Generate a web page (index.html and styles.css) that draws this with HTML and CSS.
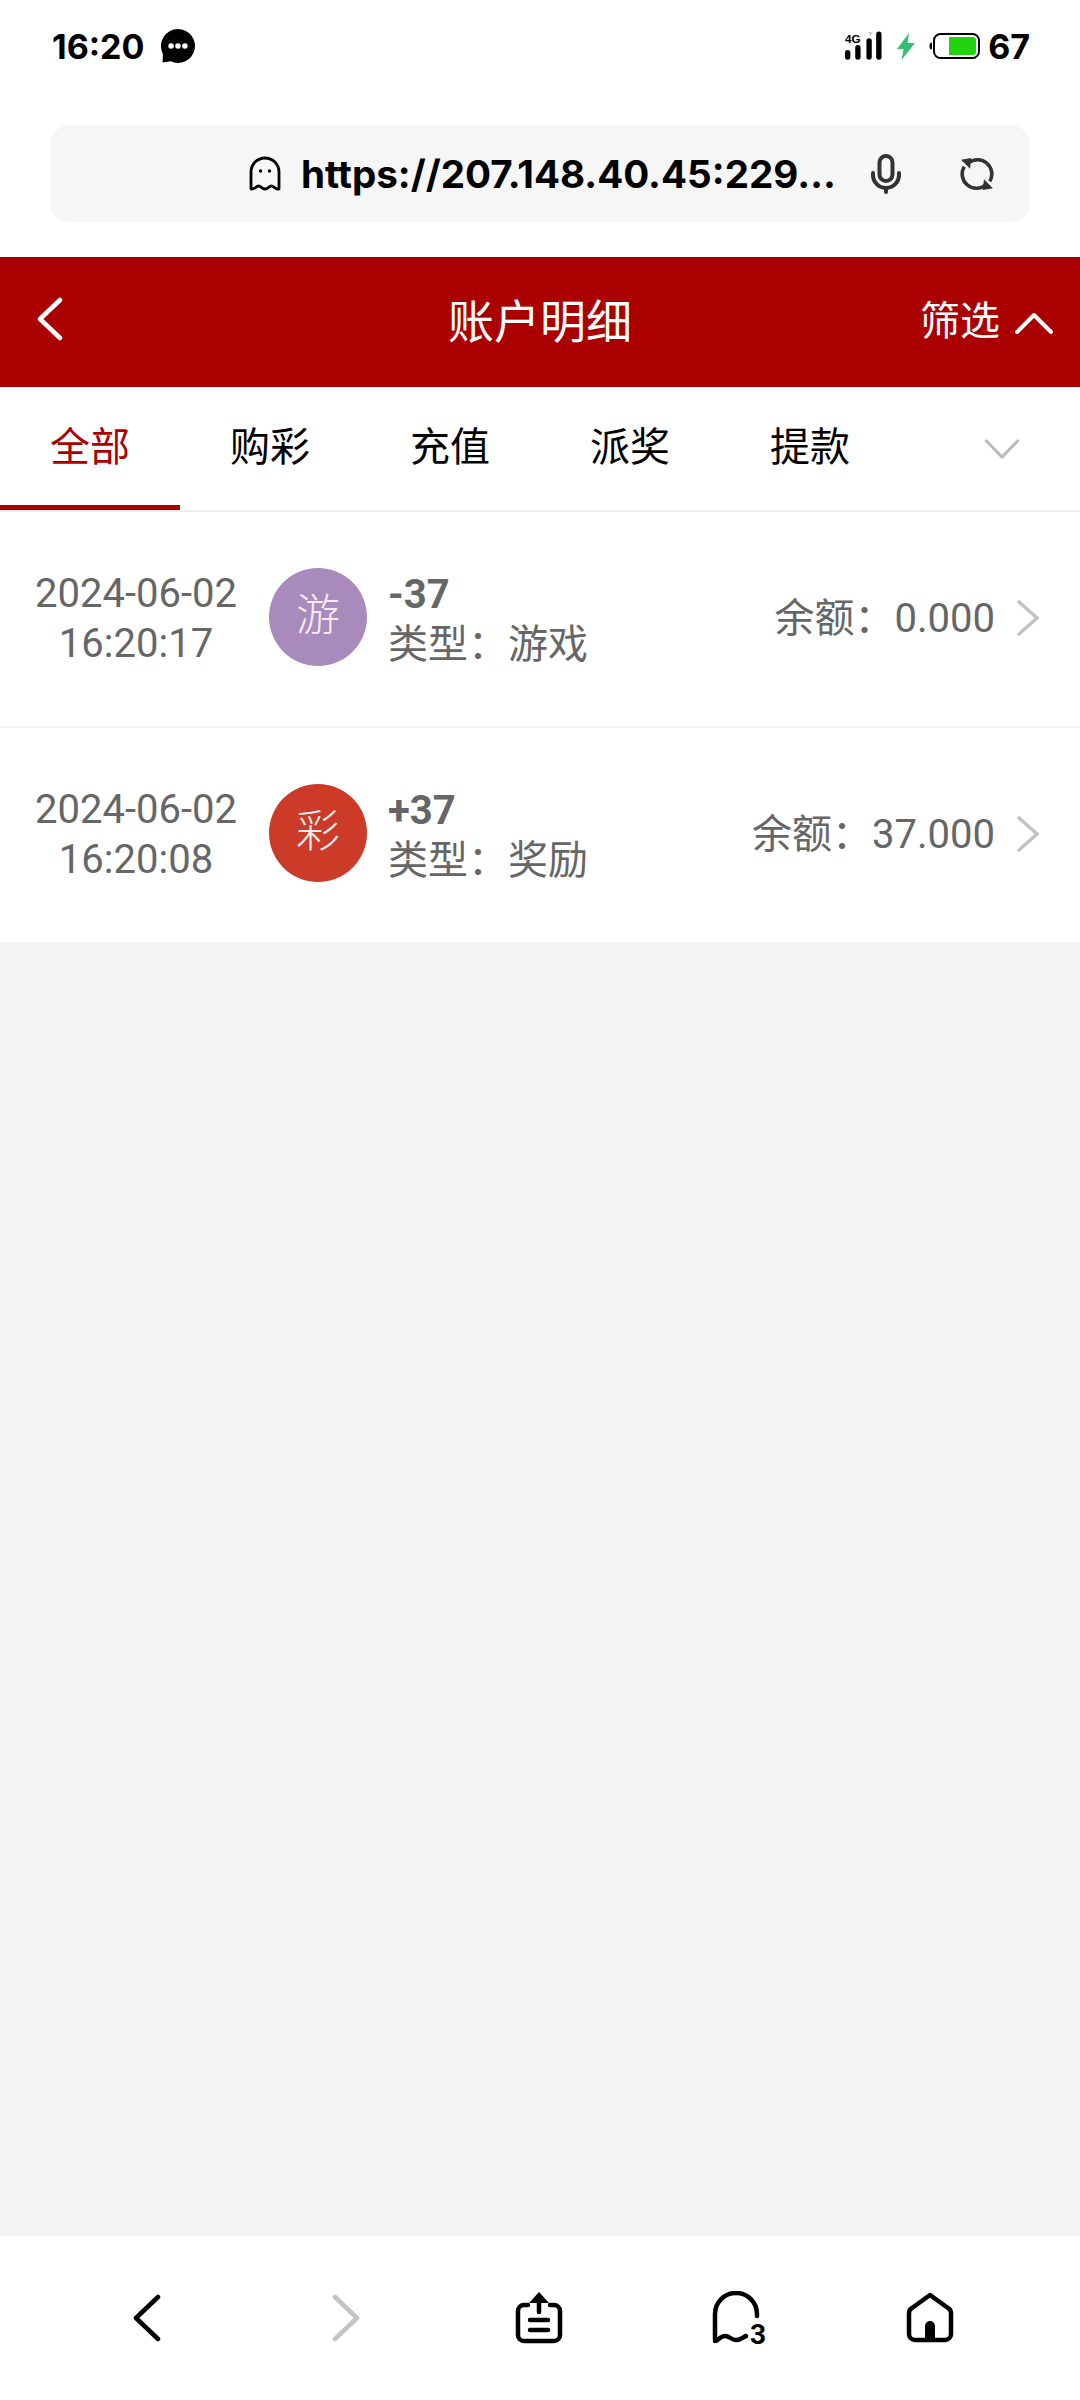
FILE: index.html
```html
<!DOCTYPE html>
<html lang="zh-CN">
<head>
  <meta charset="UTF-8" />
  <meta name="viewport" content="width=device-width, initial-scale=1" />
  <title>账户明细</title>
  <link rel="stylesheet" href="styles.css">
</head>
<body>
  <div class="status-bar">
    <span class="status-time">16:20</span>
    <svg class="status-chat" viewBox="0 0 32 32"><path d="M16 0a16 16 0 1 1-7 30.400L1.500 31.500 1.800 23.500A16 16 0 0 1 16 0z" fill="#000"/><circle cx="9.500" cy="16" r="2.600" fill="#fff"/><circle cx="16" cy="16" r="2.600" fill="#fff"/><circle cx="22.500" cy="16" r="2.600" fill="#fff"/></svg>
    <span class="status-right">
      <svg class="status-signal" viewBox="0 0 38 30">
        <text x="0" y="12" class="signal-label">4G</text>
        <path d="M23.500 1h5l-2.500 3z" fill="#bbb"/>
        <rect x="0" y="19" width="5.500" height="10" rx="2.700"/>
        <rect x="10.500" y="14" width="5.500" height="15" rx="2.700"/>
        <rect x="22" y="7" width="5.500" height="22" rx="2.700"/>
        <rect x="32" y="0" width="5.500" height="29" rx="2.700"/>
      </svg>
      <svg class="status-bolt" viewBox="0 0 18 27"><path d="M12 0 0 16h6.500L4.500 27 18 10h-7.500z" fill="#35bf70"/></svg>
      <svg class="status-battery" viewBox="0 0 52 26">
        <path d="M4 9.500a2.500 3.500 0 0 0 0 7z" fill="#000"/>
        <rect x="6" y="1" width="45" height="24" rx="6.500" fill="#fff" stroke="#000" stroke-width="2"/>
        <path d="M21 4h24a3 3 0 0 1 3 3v12a3 3 0 0 1-3 3H21z" fill="#22d312"/>
      </svg>
      <span class="status-level">67</span>
    </span>
  </div>

  <div class="url-wrap">
    <div class="url-bar">
      <div class="url-main">
        <svg class="url-ghost" viewBox="0 0 32 36" fill="none" stroke="#000" stroke-width="2.800" stroke-linejoin="round" stroke-linecap="round">
          <path d="M2 33V16a14 14 0 0 1 28 0v17c-3 1-5-3-7.500-3S19 33 16 33s-4-3-6.500-3S5 34 2 33z"/>
          <circle cx="11.500" cy="15" r="1.700" fill="#000" stroke="none"/>
          <circle cx="20.500" cy="15" r="1.700" fill="#000" stroke="none"/>
        </svg>
        <span class="url-text">https://207.148.40.45:229…</span>
      </div>
      <svg class="url-mic" viewBox="0 0 30 40" fill="none" stroke="#333" stroke-width="4" stroke-linecap="round">
        <rect x="8.500" y="2" width="13" height="25" rx="6.500"/>
        <path d="M2 19v2a13 13 0 0 0 26 0v-2M15 34v4"/>
      </svg>
      <svg class="url-reload" viewBox="0 0 32 32" fill="none" stroke="#333" stroke-width="3.400">
        <path d="M8 5.500A13.500 13.500 0 0 1 28 23"/>
        <path d="M24 26.500A13.500 13.500 0 0 1 4 9"/>
        <path d="M1 2.500 10.500 1l-1 10zM31 29.500 21.500 31l1-10z" fill="#333" stroke="none"/>
      </svg>
    </div>
  </div>

  <header class="nav">
    <svg class="nav-back" viewBox="0 0 26 44" fill="none" stroke="#fff" stroke-width="4.500" stroke-linecap="round" stroke-linejoin="round"><path d="M23 3 3 22l20 19"/></svg>
    <h1 class="nav-title">账户明细</h1>
    <div class="nav-filter">
      <span>筛选</span>
      <svg class="nav-arrow" viewBox="0 0 38 22" fill="none" stroke="#fff" stroke-width="4" stroke-linecap="round" stroke-linejoin="round"><path d="M2 20 19 3l17 17"/></svg>
    </div>
  </header>

  <nav class="tabs">
    <a class="tab active">全部</a>
    <a class="tab">购彩</a>
    <a class="tab">充值</a>
    <a class="tab">派奖</a>
    <a class="tab">提款</a>
    <svg class="tabs-more" viewBox="0 0 36 22" fill="none" stroke="#bbb" stroke-width="3"><path d="M1.500 2 18 19 34.500 2"/></svg>
  </nav>

  <main class="content">
    <div class="record">
      <div class="record-date">2024-06-02<br>16:20:17</div>
      <div class="record-badge badge-game">游</div>
      <div class="record-info">
        <div class="record-amount">-37</div>
        <div>类型：游戏</div>
      </div>
      <div class="record-balance">余额：0.000</div>
      <svg class="record-arrow" viewBox="0 0 24 38" fill="none" stroke="#c2c2c2" stroke-width="3.500"><path d="M2 2l19 17L2 36"/></svg>
    </div>
    <div class="record">
      <div class="record-date">2024-06-02<br>16:20:08</div>
      <div class="record-badge badge-lottery">彩</div>
      <div class="record-info">
        <div class="record-amount">+37</div>
        <div>类型：奖励</div>
      </div>
      <div class="record-balance">余额：37.000</div>
      <svg class="record-arrow" viewBox="0 0 24 38" fill="none" stroke="#c2c2c2" stroke-width="3.500"><path d="M2 2l19 17L2 36"/></svg>
    </div>
  </main>

  <footer class="toolbar">
    <svg class="tool tool-arrow" viewBox="0 0 28 48" fill="none" stroke="#000" stroke-width="4.500" stroke-linecap="round" stroke-linejoin="round"><path d="M25 3 3 24l22 21"/></svg>
    <svg class="tool tool-arrow" viewBox="0 0 28 48" fill="none" stroke="#c4c4c4" stroke-width="4.500" stroke-linecap="round" stroke-linejoin="round"><path d="M3 3l22 21L3 45"/></svg>
    <svg class="tool" viewBox="0 0 48 52" fill="none" stroke="#000" stroke-width="4.500" stroke-linecap="round">
      <path d="M13 13H9a6 6 0 0 0-6 6v24a6 6 0 0 0 6 6h30a6 6 0 0 0 6-6V19a6 6 0 0 0-6-6h-4"/>
      <path d="M24 20V7M15 28h18M15 38h18"/>
      <path d="M24 0l10 11H14z" fill="#000" stroke="none"/>
    </svg>
    <svg class="tool tool-tabs" viewBox="0 0 64 64">
      <path d="M4 48V23a21 21 0 0 1 42 0v2M4 50c3 0 5-5 10-5s6 4 11 4 7-3 10-4" fill="none" stroke="#000" stroke-width="4.500" stroke-linecap="round"/>
      <text x="39" y="53" class="tab-count">3</text>
    </svg>
    <svg class="tool" viewBox="0 0 48 52" fill="none" stroke="#000" stroke-width="4.500" stroke-linejoin="round">
      <path d="M24 3 6 16a6 6 0 0 0-3 5v21a6 6 0 0 0 6 6h30a6 6 0 0 0 6-6V21a6 6 0 0 0-3-5z"/>
      <path d="M19 48V34a5 5 0 0 1 10 0v14z" fill="#000" stroke="none"/>
    </svg>
  </footer>
</body>
</html>
```

FILE: styles.css
```css
* {
  box-sizing: border-box;
}
body {
  margin: 0;
  height: 2400px;
  display: flex;
  flex-direction: column;
  background: #fff;
  font-family: Roboto, "Noto Sans CJK SC", sans-serif;
}

/* phone status bar */
.status-bar {
  height: 92px;
  padding: 0 50px 0 52px;
  display: flex;
  align-items: center;
  color: #000;
  font-family: Inter, "Liberation Sans", sans-serif;
  font-weight: 700;
  font-size: 34px;
}
.status-chat {
  width: 34px;
  height: 34px;
  margin-left: 17px;
}
.status-right {
  margin-left: auto;
  display: flex;
  align-items: center;
}
.status-signal {
  width: 37px;
  height: 30px;
  fill: #000;
}
.signal-label {
  font-family: "Liberation Sans", sans-serif;
  font-size: 12px;
  font-weight: 700;
}
.status-bolt {
  width: 18px;
  height: 27px;
  margin-left: 15px;
}
.status-battery {
  width: 52px;
  height: 26px;
  margin-left: 13px;
}
.status-level {
  margin-left: 8px;
  font-size: 34px;
}

/* browser address bar */
.url-wrap {
  height: 165px;
  padding: 33px 50px 0;
}
.url-bar {
  height: 97px;
  border-radius: 20px;
  background: #f6f6f6;
  display: flex;
  align-items: center;
  padding-right: 35px;
}
.url-main {
  width: 787px;
  display: flex;
  align-items: center;
  padding-left: 199px;
}
.url-ghost {
  width: 32px;
  height: 36px;
  flex: none;
}
.url-text {
  margin-left: 20px;
  font-family: Inter, "Liberation Sans", sans-serif;
  font-weight: 700;
  font-size: 38.6px;
  white-space: nowrap;
}
.url-mic {
  width: 30px;
  height: 40px;
  margin-left: 34px;
}
.url-reload {
  width: 34px;
  height: 34px;
  margin-left: 59px;
}

/* red title bar */
.nav {
  height: 130px;
  padding-bottom: 8px;
  background: #aa0000;
  color: #fff;
  display: flex;
  align-items: center;
  justify-content: center;
  position: relative;
}
.nav-title {
  margin: 0;
  font-size: 46px;
  font-weight: 400;
}
.nav-back {
  position: absolute;
  left: 37px;
  top: 40px;
  width: 26px;
  height: 44px;
}
.nav-filter {
  position: absolute;
  right: 27px;
  top: 0;
  height: 122px;
  display: flex;
  align-items: center;
  gap: 15px;
  font-size: 40px;
}
.nav-arrow {
  width: 38px;
  height: 22px;
  margin-top: 10px;
}

/* category tabs */
.tabs {
  height: 125px;
  display: flex;
  border-bottom: 2px solid #efefef;
}
.tab {
  width: 180px;
  height: 123px;
  padding-top: 34px;
  text-align: center;
  font-size: 40px;
  line-height: 54px;
  color: #000;
}
.tab.active {
  color: #aa0000;
  border-bottom: 5px solid #aa0000;
}
.tabs-more {
  width: 36px;
  height: 22px;
  margin: 51px 0 0 84px;
}

/* record list */
.content {
  flex: 1;
  background: #f3f3f3;
}
.record {
  height: 214px;
  padding-bottom: 4px;
  background: #fff;
  display: flex;
  align-items: center;
  color: #666;
  font-size: 40px;
  line-height: 50px;
}
.record + .record {
  margin-top: 2px;
}
.record-date {
  width: 204px;
  margin: 3px 30px 0 34px;
  text-align: center;
  white-space: nowrap;
}
.record-badge {
  width: 98px;
  height: 98px;
  margin-left: 1px;
  margin-right: -1px;
  border-radius: 50%;
  color: #f6ecf0;
  text-align: center;
  line-height: 96px;
  font-size: 44px;
  font-weight: 300;
}
.badge-game {
  background: #a98abd;
}
.badge-lottery {
  background: #cc3a28;
}
.record-info {
  flex: 1;
  margin: 5px 0 0 22px;
  white-space: nowrap;
}
.record-amount {
  font-weight: 700;
}
.record-balance {
  margin-top: 3px;
  white-space: nowrap;
}
.record-arrow {
  width: 24px;
  height: 38px;
  margin: 2px 40px 0 21px;
}

/* bottom browser toolbar */
.toolbar {
  height: 164px;
  flex: none;
  background: #fff;
  display: grid;
  grid-template-columns: 200px 198px 188px 212px 170px;
  padding: 0 47px;
  justify-items: center;
  align-items: center;
}
.tool {
  width: 48px;
  height: 52px;
}
.tool-arrow {
  width: 28px;
  height: 48px;
}
.tool-tabs {
  width: 64px;
  height: 64px;
  margin: 10px 0 0 8px;
}
.tab-count {
  font-family: Roboto, sans-serif;
  font-size: 28px;
  font-weight: 700;
  fill: #000;
}
```
